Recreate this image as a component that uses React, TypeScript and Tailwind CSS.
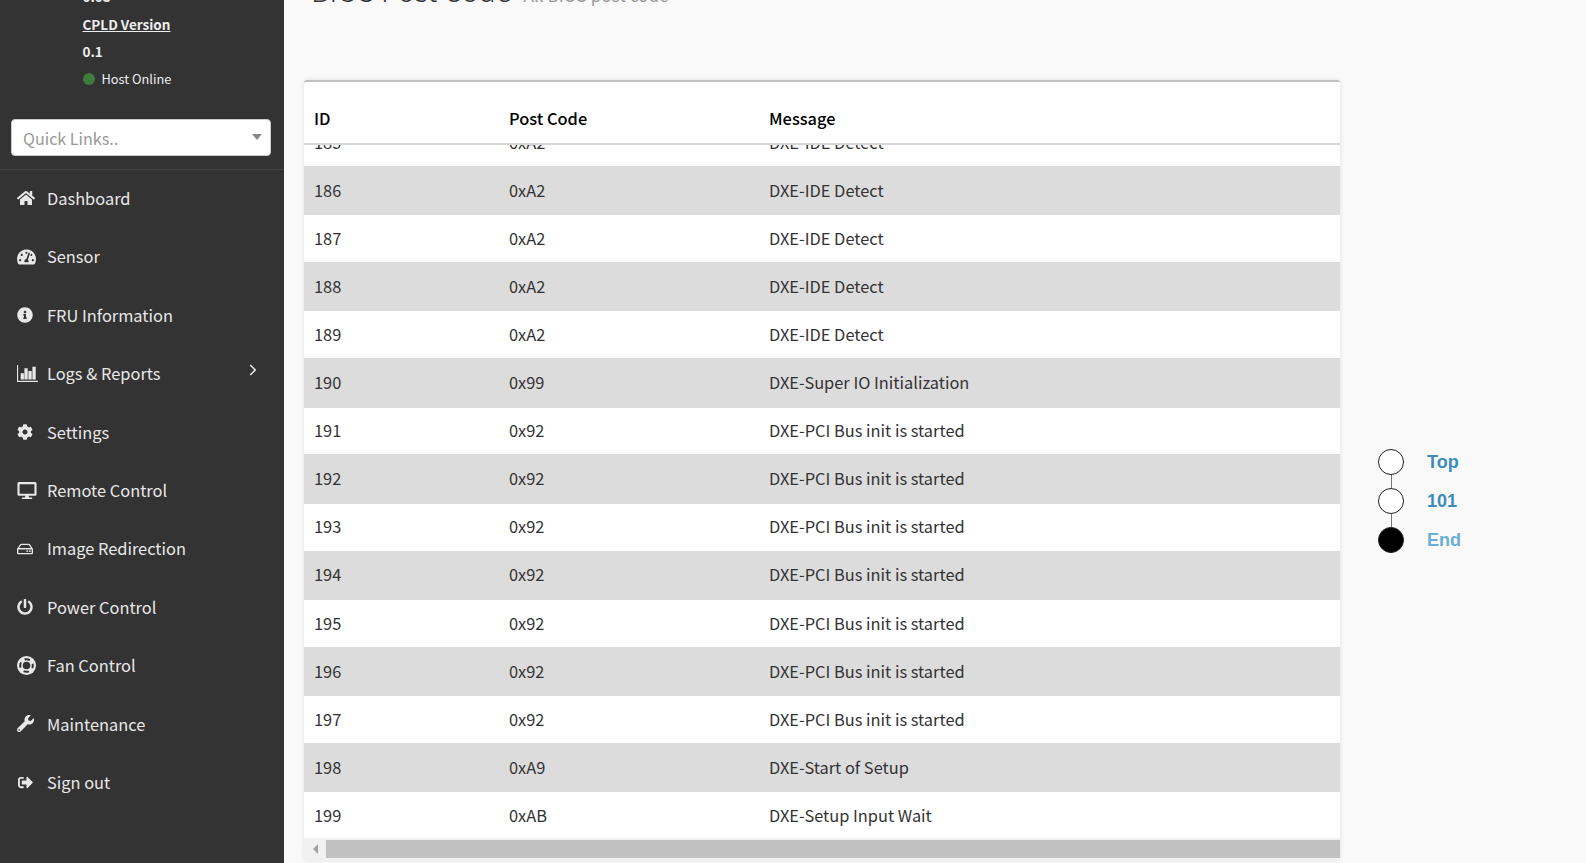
import { ChevronRight } from "lucide-react";
import {
  FaHome,
  FaTachometerAlt,
  FaInfoCircle,
  FaCog,
  FaDesktop,
  FaRegHdd,
  FaPowerOff,
  FaWrench,
  FaSignOutAlt,
} from "react-icons/fa";

function BarChartIcon({ className }: { className?: string }) {
  return (
    <svg viewBox="0 0 21 17" fill="currentColor" className={className}>
      <path d="M0 0h1.1v15.8H21V17H0z" />
      <path d="M3.7 8.3h3.2v6.2H3.7zM7.4 3.3h3.3v11.2H7.4zM11.4 6h3.3v8.5h-3.3zM15.4 1.7h3.3v12.8h-3.3z" />
    </svg>
  );
}

function LifeRingIcon({ className }: { className?: string }) {
  return (
    <svg viewBox="0 0 19 19" className={className}>
      <circle cx="9.5" cy="9.5" r="9.5" fill="currentColor" />
      <circle cx="9.5" cy="9.5" r="3.8" fill="#333333" />
      <circle
        cx="9.5"
        cy="9.5"
        r="6.3"
        fill="none"
        stroke="#333333"
        strokeWidth="2"
        strokeDasharray="5.5 4.4"
        strokeDashoffset="2.75"
      />
    </svg>
  );
}

const menu = [
  { label: "Dashboard", icon: FaHome, size: "h-[16px] w-[18px]" },
  { label: "Sensor", icon: FaTachometerAlt, size: "h-[18px] w-[19px]" },
  { label: "FRU Information", icon: FaInfoCircle, size: "h-[16px] w-[16px]" },
  { label: "Logs & Reports", icon: BarChartIcon, size: "h-[17px] w-[21px]", more: true },
  { label: "Settings", icon: FaCog, size: "h-[16px] w-[16px]" },
  { label: "Remote Control", icon: FaDesktop, size: "h-[17px] w-[20px]" },
  { label: "Image Redirection", icon: FaRegHdd, size: "h-[16px] w-[16px]" },
  { label: "Power Control", icon: FaPowerOff, size: "h-[16px] w-[16px]" },
  { label: "Fan Control", icon: LifeRingIcon, size: "h-[19px] w-[19px]" },
  { label: "Maintenance", icon: FaWrench, size: "h-[17px] w-[17px]" },
  { label: "Sign out", icon: FaSignOutAlt, size: "h-[15px] w-[17px]" },
];

const pci = "DXE-PCI Bus init is started";
const rows = [
  ["185", "0xA2", "DXE-IDE Detect"],
  ["186", "0xA2", "DXE-IDE Detect"],
  ["187", "0xA2", "DXE-IDE Detect"],
  ["188", "0xA2", "DXE-IDE Detect"],
  ["189", "0xA2", "DXE-IDE Detect"],
  ["190", "0x99", "DXE-Super IO Initialization"],
  ["191", "0x92", pci],
  ["192", "0x92", pci],
  ["193", "0x92", pci],
  ["194", "0x92", pci],
  ["195", "0x92", pci],
  ["196", "0x92", pci],
  ["197", "0x92", pci],
  ["198", "0xA9", "DXE-Start of Setup"],
  ["199", "0xAB", "DXE-Setup Input Wait"],
];

const steps = [
  { label: "Top", filled: false, color: "text-[#3c8dbc]" },
  { label: "101", filled: false, color: "text-[#3c8dbc]" },
  { label: "End", filled: true, color: "text-[#6aaed6]" },
];

function Sidebar() {
  return (
    <aside className="w-[284px] shrink-0 bg-[#333333] text-[#eeeeee]">
      <div className="-mt-[17px] pl-[82.5px] text-[13.5px] font-bold leading-[27.3px]">
        <div>0.03</div>
        <div className="translate-y-px underline">CPLD Version</div>
        <div>0.1</div>
        <div className="flex items-center text-[12.8px] font-normal">
          <span className="mr-[7px] h-[12px] w-[12px] rounded-full bg-[#3c7d3c]" />
          Host Online
        </div>
      </div>
      <div className="mt-[27px] border-b border-[#444444] px-[11px] pb-[13px]">
        <div className="flex h-[37px] w-[260px] items-center justify-between rounded-[4px] border border-[#cccccc] bg-white pl-[11px] pr-[8px] text-[16.1px] text-[#999999]">
          Quick Links..
          <span className="mt-[-1px] h-0 w-0 border-x-[5px] border-t-[6px] border-x-transparent border-t-[#888888]" />
        </div>
      </div>
      <nav className="-mt-px">
        {menu.map((item) => (
          <div key={item.label} className="relative flex h-[58.4px] items-center pl-[17px] text-[16.4px] text-[#e8e8e8]">
            <span className="flex w-[30px] shrink-0">
              <item.icon className={item.size} />
            </span>
            {item.label}
            {item.more && (
              <ChevronRight className="absolute right-[22px] top-[17px] h-[18px] w-[18px]" strokeWidth={2.2} />
            )}
          </div>
        ))}
      </nav>
    </aside>
  );
}

function PostCodeTable() {
  return (
    <div className="mt-[50px] w-[1036px] rounded-[3px] border-t-2 border-[#c1c1c1] bg-white shadow-[0_0_5px_rgba(0,0,0,0.1)]">
      <div className="grid h-[63px] grid-cols-[195px_260px_1fr] items-end border-b-2 border-[#d6d6d6] px-[10px] pb-[13px] text-[16.4px] font-medium leading-[24px] text-black">
        <div>ID</div>
        <div>Post Code</div>
        <div>Message</div>
      </div>
      <div className="h-[693px] overflow-hidden">
        <div className="-mt-[25.9px]">
          {rows.map((r, i) => (
            <div
              key={r[0]}
              className={`grid grid-cols-[195px_260px_1fr] items-center px-[10px] pb-px text-[16.4px] text-[#333333] ${
                i % 2 === 1 ? "h-[49.25px] bg-[#dcdcdc]" : "h-[46.92px] bg-white"
              }`}
            >
              <div>{r[0]}</div>
              <div>{r[1]}</div>
              <div>{r[2]}</div>
            </div>
          ))}
        </div>
      </div>
      <div className="flex h-[22px] items-center bg-[#f1f1f1] py-[2px]">
        <div className="flex h-[18px] w-[22px] items-center justify-center">
          <span className="h-0 w-0 border-y-[5px] border-r-[5px] border-y-transparent border-r-[#a3a3a3]" />
        </div>
        <div className="h-[18px] flex-1 bg-[#c1c1c1]" />
      </div>
    </div>
  );
}

function Timeline() {
  return (
    <div className="ml-[38px] pt-[449px] font-['Liberation_Sans',Arial,sans-serif] text-[18px] font-bold leading-none">
      {steps.map((s, i) => (
        <div key={s.label}>
          <div className="flex items-center">
            <span
              className={`h-[26px] w-[26px] rounded-full border border-[#222222] ${s.filled ? "bg-black" : "bg-white"}`}
            />
            <span className={`ml-[23px] ${s.color}`}>{s.label}</span>
          </div>
          {i < steps.length - 1 && <div className="ml-[12.5px] h-[13px] w-px bg-[#777777]" />}
        </div>
      ))}
    </div>
  );
}

export default function App() {
  return (
    <div className="flex h-[863px] overflow-hidden bg-[#f9f9f9] font-['Noto_Sans_CJK_SC','Noto_Sans',sans-serif]">
      <Sidebar />
      <main className="flex flex-1 items-start pl-[20px]">
        <div>
          <div className="-mt-[39px] flex h-[69px] items-baseline pl-[7px]">
            <h1 className="text-[28.7px] font-light leading-[57px] text-[#333333]">BIOS Post Code</h1>
            <small className="ml-[12px] text-[17.2px] text-[#999999]">All BIOS post code</small>
          </div>
          <PostCodeTable />
        </div>
        <Timeline />
      </main>
    </div>
  );
}
